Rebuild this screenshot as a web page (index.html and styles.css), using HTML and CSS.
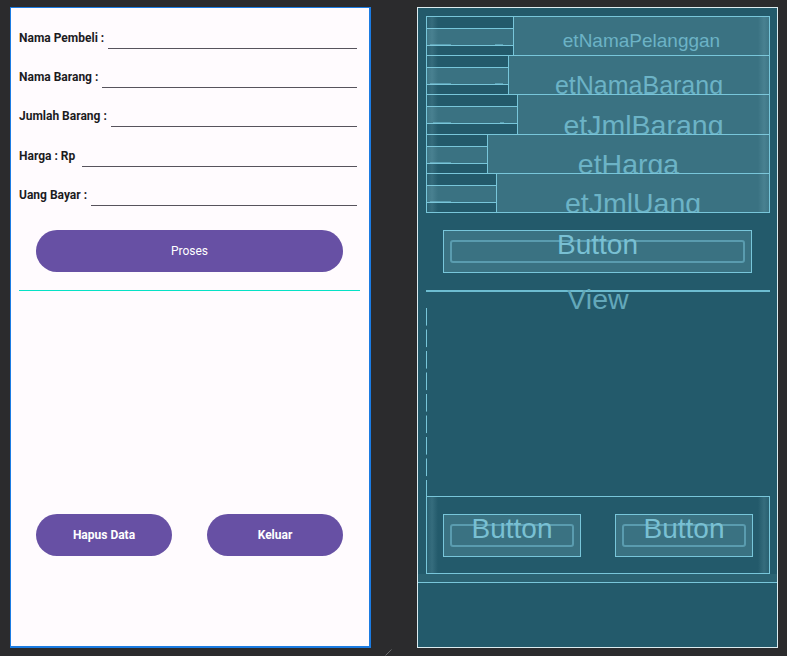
FILE: index.html
```html
<!DOCTYPE html>
<html lang="id">
<head>
<meta charset="utf-8">
<title>Transaksi</title>
<link rel="stylesheet" href="styles.css">
</head>
<body>
<div class="workspace">
  <section class="phone">
    <div class="form">
      <div class="row"><span class="label">Nama Pembeli :</span><span class="field"></span></div>
      <div class="row"><span class="label">Nama Barang :</span><span class="field"></span></div>
      <div class="row row-tall"><span class="label">Jumlah Barang :</span><span class="field"></span></div>
      <div class="row"><span class="label">Harga : Rp&nbsp;</span><span class="field"></span></div>
      <div class="row"><span class="label">Uang Bayar :</span><span class="field"></span></div>
    </div>
    <button class="btn btn-wide">Proses</button>
    <hr class="divider">
    <div class="actions">
      <button class="btn btn-half">Hapus Data</button>
      <button class="btn btn-half">Keluar</button>
    </div>
  </section>

  <div class="gutter">
    <svg class="grip" width="7" height="7" viewBox="0 0 7 7"><line x1="0.5" y1="6.5" x2="6.5" y2="0.5" stroke="#6a6a6c" stroke-width="1"/></svg>
  </div>

  <section class="blueprint">
    <div class="bp-main">
      <div class="bp-form shade">
        <div class="bp-row">
          <div class="bp-label w1"><div class="bp-band-mid tick-a"></div></div>
          <div class="bp-edit e1">etNamaPelanggan</div>
        </div>
        <div class="bp-row">
          <div class="bp-label w2"><div class="bp-band-mid tick-a"></div></div>
          <div class="bp-edit e2">etNamaBarang</div>
        </div>
        <div class="bp-row bp-row-tall">
          <div class="bp-label w3"><div class="bp-band-mid tick-b"></div></div>
          <div class="bp-edit e3">etJmlBarang</div>
        </div>
        <div class="bp-row">
          <div class="bp-label w4"><div class="bp-band-mid"></div></div>
          <div class="bp-edit e4">etHarga</div>
        </div>
        <div class="bp-row">
          <div class="bp-label w5"><div class="bp-band-mid"></div></div>
          <div class="bp-edit e5">etJmlUang</div>
        </div>
      </div>

      <div class="bp-btn bp-btn-wide"><span class="bp-btn-bg"></span><span class="bp-btn-text">Button</span></div>

      <div class="bp-view-line"></div>
      <div class="bp-view-text">View</div>
      <div class="bp-list"></div>

      <div class="bp-actions shade">
        <div class="bp-btn bp-btn-half"><span class="bp-btn-bg"></span><span class="bp-btn-text">Button</span></div>
        <div class="bp-btn bp-btn-half"><span class="bp-btn-bg"></span><span class="bp-btn-text">Button</span></div>
      </div>
    </div>
    <div class="bp-band"></div>
  </section>
</div>
</body>
</html>
```

FILE: styles.css
```css
* {
  box-sizing: border-box;
  margin: 0;
  padding: 0;
}

html, body {
  width: 787px;
  height: 656px;
  overflow: hidden;
}

body {
  background: #2b2b2d;
  font-family: Roboto, "Noto Sans", sans-serif;
}

.workspace {
  display: flex;
  align-items: flex-start;
  height: 656px;
  padding: 7px 0 0 10px;
}

/* ---------- Design view (phone) ---------- */
.phone {
  width: 361px;
  height: 641px;
  flex: none;
  background: #fffbfe;
  border: 1px solid #1b7be2;
  border-right-width: 2px;
  border-bottom-width: 2px;
  padding: 8px 8px 0 8px;
  display: flex;
  flex-direction: column;
}

.form {
  display: flex;
  flex-direction: column;
}

.row {
  display: flex;
  height: 39px;
}

.row-tall {
  height: 40px;
}

.label {
  font-size: 12px;
  font-weight: 700;
  line-height: 14px;
  padding-top: 15px;
  color: #1c1b1f;
  white-space: pre;
}

.field {
  flex: 1;
  height: 33px;
  margin: 0 4px 0 4px;
  border-bottom: 1px solid #57535c;
}

.btn {
  border: 0;
  background: #6750a4;
  color: #ffffff;
  border-radius: 21px;
  font-family: Roboto, "Noto Sans", sans-serif;
  font-size: 12px;
  height: 42px;
}

.btn-wide {
  margin: 18px 18px 0 17px;
  font-weight: 400;
}

.divider {
  border: 0;
  height: 1px;
  background: #06e2c6;
  margin: 18px 1px 0 0;
}

.actions {
  display: flex;
  justify-content: space-between;
  margin-top: 223px;
  padding: 0 18px 0 17px;
}

.btn-half {
  width: 136px;
  font-weight: 700;
}

/* ---------- gutter ---------- */
.gutter {
  width: 46px;
  height: 649px;
  flex: none;
  display: flex;
  align-items: flex-end;
  padding-left: 14px;
}

.grip {
  display: block;
}

/* ---------- Blueprint view ---------- */
.blueprint {
  width: 361px;
  height: 641px;
  flex: none;
  background: #235a6b;
  border: 1px solid #dcecf0;
  display: flex;
  flex-direction: column;
}

.bp-main {
  display: flex;
  flex-direction: column;
  padding: 8px 7px 0 8px;
}

.shade {
  position: relative;
}

.shade::before,
.shade::after {
  content: "";
  position: absolute;
  top: 0;
  bottom: 0;
  width: 11px;
  pointer-events: none;
}

.shade::before {
  left: 0;
  background: linear-gradient(to right, rgba(150, 205, 220, 0.05), rgba(150, 205, 220, 0.16) 45%, rgba(150, 205, 220, 0));
}

.shade::after {
  right: 0;
  background: linear-gradient(to left, rgba(150, 205, 220, 0.05), rgba(150, 205, 220, 0.16) 45%, rgba(150, 205, 220, 0));
}

.bp-form {
  display: flex;
  flex-direction: column;
  border: 1px solid #78c6da;
}

.bp-row {
  display: flex;
  height: 39px;
  border-bottom: 1px solid #78c6da;
}

.bp-row-tall {
  height: 40px;
}

.bp-row:last-child {
  height: 38px;
  border-bottom: 0;
}

.bp-label {
  flex: none;
  border-right: 1px solid #78c6da;
  padding-top: 11px;
}

.w1 { width: 87px; }
.w2 { width: 82px; }
.w3 { width: 91px; }
.w4 { width: 61px; }
.w5 { width: 70px; }

.bp-band-mid {
  height: 18px;
  border-top: 1px solid #78c6da;
  border-bottom: 1px solid #78c6da;
  background:
    linear-gradient(#5b9fb2, #5b9fb2) 3px 15px / 21px 1px no-repeat,
    #3a7282;
}

.tick-a {
  background:
    linear-gradient(#5b9fb2, #5b9fb2) 3px 15px / 21px 1px no-repeat,
    linear-gradient(#5b9fb2, #5b9fb2) 68px 15px / 8px 1px no-repeat,
    #3a7282;
}

.tick-b {
  background:
    linear-gradient(#5b9fb2, #5b9fb2) 6px 15px / 18px 1px no-repeat,
    linear-gradient(#5b9fb2, #5b9fb2) 73px 15px / 4px 1px no-repeat,
    #3a7282;
}

.bp-edit {
  flex: 1;
  background: #3a7282;
  color: #6cb3c6;
  font-family: "Liberation Sans", Arial, sans-serif;
  line-height: 1;
  text-align: center;
  white-space: nowrap;
  overflow: hidden;
}

.e1 { font-size: 19px; padding-top: 14px; }
.e2 { font-size: 25px; padding-top: 17px; }
.e3 { font-size: 28.5px; padding-top: 16px; }
.e4 { font-size: 28.5px; padding-top: 15px; }
.e5 { font-size: 28.5px; padding-top: 15px; }

.bp-btn {
  display: grid;
  height: 43px;
  border: 1px solid #78c6da;
  background: #3a7282;
}

.bp-btn > span {
  grid-area: 1 / 1;
}

.bp-btn-wide {
  margin: 17px 18px 0 17px;
}

.bp-btn-bg {
  margin: 9px 6px 9px 6px;
  border: 2px solid #5a9caf;
  border-radius: 3px;
}

.bp-btn-text {
  align-self: start;
  font-family: "Liberation Sans", Arial, sans-serif;
  font-size: 28px;
  line-height: 28px;
  color: #79c0d3;
  text-align: center;
}

.bp-view-line {
  height: 2px;
  margin-top: 17px;
  background: #6dbdd1;
}

.bp-view-text {
  height: 23px;
  margin-top: -7px;
  font-family: "Liberation Sans", Arial, sans-serif;
  font-size: 28.5px;
  line-height: 28px;
  color: #63a8ba;
  text-align: center;
}

.bp-list {
  height: 188px;
  background: linear-gradient(#78c6da 0 18px, transparent 18px) 0 0 / 1px 21.5px repeat-y;
}

.bp-actions {
  display: flex;
  gap: 34px;
  height: 78px;
  padding: 17px 16px 0 16px;
  border: 1px solid #78c6da;
}

.bp-btn-half {
  width: 138px;
  flex: none;
}

.bp-band {
  height: 9px;
  background: #2b6373;
  border-bottom: 1px solid #78c6da;
}
```
